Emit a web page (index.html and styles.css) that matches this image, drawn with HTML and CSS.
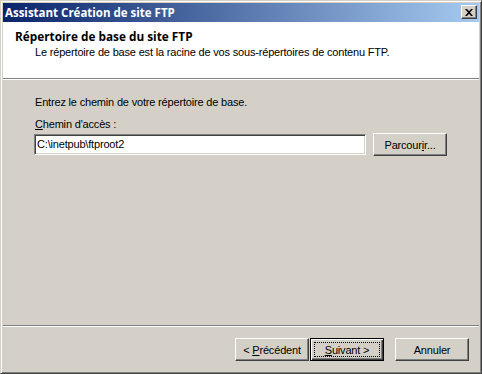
FILE: index.html
```html
<!DOCTYPE html>
<html lang="fr">
<head>
<meta charset="UTF-8">
<title>Assistant Création de site FTP</title>
<link rel="stylesheet" href="styles.css">
</head>
<body>
<div class="window">
  <div class="titlebar">
    <span class="title">Assistant Création de site FTP</span>
    <button class="close" type="button">
      <svg width="8" height="7" viewBox="0 0 8 7"><path d="M0 0h2l2 2.2L6 0h2L5 3.5 8 7H6L4 4.8 2 7H0l3-3.5z" fill="#000"/></svg>
    </button>
  </div>

  <div class="header">
    <h1>Répertoire de base du site FTP</h1>
    <p>Le répertoire de base est la racine de vos sous-répertoires de contenu FTP.</p>
  </div>

  <div class="content">
    <p class="intro">Entrez le chemin de votre répertoire de base.</p>
    <label class="label" for="path"><u>C</u>hemin d'accès :</label>
    <div class="path-row">
      <div class="field" id="path">C:\inetpub\ftproot2</div>
      <button class="btn browse" type="button">Parcour<u>i</u>r...</button>
    </div>
  </div>

  <div class="footer">
    <button class="btn" type="button">&lt; <u>P</u>récédent</button>
    <button class="btn default" type="button"><span class="focus"><u>S</u>uivant &gt;</span></button>
    <button class="btn cancel" type="button">Annuler</button>
  </div>
</div>
</body>
</html>
```

FILE: styles.css
```css
body {
    margin: 0;
    font-family: "Liberation Sans", Arial, sans-serif;
    font-size: 11px;
    line-height: 13px;
    letter-spacing: -0.18px;
    color: #000;
}

.window {
    width: 482px;
    height: 374px;
    box-sizing: border-box;
    display: flex;
    flex-direction: column;
    background-color: #d4d0c8;
    border: 1px solid;
    border-color: #d4d0c8 #404040 #404040 #d4d0c8;
    box-shadow: inset 1px 1px #fff, inset -1px -1px #808080;
    padding: 2px;
}

.titlebar {
    height: 19px;
    flex: none;
    display: flex;
    align-items: flex-start;
    justify-content: space-between;
    background: linear-gradient(to right, #0a246a, #a6caf0);
}

.title {
    color: #fff;
    font-family: "Open Sans", "Liberation Sans", sans-serif;
    font-size: 11.5px;
    font-weight: bold;
    letter-spacing: 0;
    line-height: 19px;
    padding-left: 2px;
}

.close {
    width: 16px;
    height: 14px;
    margin: 2px 2px 0 0;
    padding: 0;
    box-sizing: border-box;
    display: flex;
    align-items: center;
    justify-content: center;
    background-color: #d4d0c8;
    border: 1px solid;
    border-color: #fff #404040 #404040 #fff;
    box-shadow: inset -1px -1px #808080;
}

.header {
    height: 57px;
    flex: none;
    background-color: #fff;
    border-bottom: 1px solid #808080;
    padding: 8px 0 0 12px;
    box-sizing: border-box;
}

.header h1 {
    margin: 0;
    font-family: "Open Sans", "Liberation Sans", sans-serif;
    font-size: 11.8px;
    font-weight: bold;
    letter-spacing: 0;
}

.header p {
    margin: 3px 0 0 20px;
}

.content {
    flex: 1;
    border-top: 1px solid #fff;
    border-bottom: 1px solid #808080;
    padding: 16px 0 0 32px;
}

.intro {
    margin: 0;
}

.label {
    display: block;
    margin-top: 9px;
}

.path-row {
    display: flex;
    align-items: center;
    gap: 7px;
    margin-top: 2px;
}

.field {
    width: 332px;
    height: 21px;
    margin-left: -1px;
    box-sizing: border-box;
    background-color: #fff;
    border: 1px solid;
    border-color: #808080 #fff #fff #808080;
    box-shadow: inset 1px 1px #404040, inset -1px -1px #d4d0c8;
    padding: 3px 0 0 2px;
    white-space: nowrap;
}

.btn {
    width: 74px;
    height: 23px;
    padding: 0;
    box-sizing: border-box;
    font-family: inherit;
    font-size: 11px;
    letter-spacing: inherit;
    color: #000;
    background-color: #d4d0c8;
    border: 1px solid;
    border-color: #fff #404040 #404040 #fff;
    box-shadow: inset -1px -1px #808080;
}

.footer {
    height: 45px;
    flex: none;
    border-top: 1px solid #fff;
    box-sizing: border-box;
    display: flex;
    justify-content: flex-end;
    align-items: flex-start;
    gap: 1px;
    padding: 11px 10px 0 0;
}

.default {
    border: 1px solid #000;
    box-shadow: inset 1px 1px #fff, inset -1px -1px #404040, inset -2px -2px #808080;
    display: flex;
    align-items: center;
    justify-content: center;
    padding: 3px;
}

.focus {
    flex: 1;
    align-self: stretch;
    display: flex;
    align-items: center;
    justify-content: center;
    outline: 1px dotted #000;
    outline-offset: -1px;
}

.cancel {
    margin-left: 10px;
}
```
